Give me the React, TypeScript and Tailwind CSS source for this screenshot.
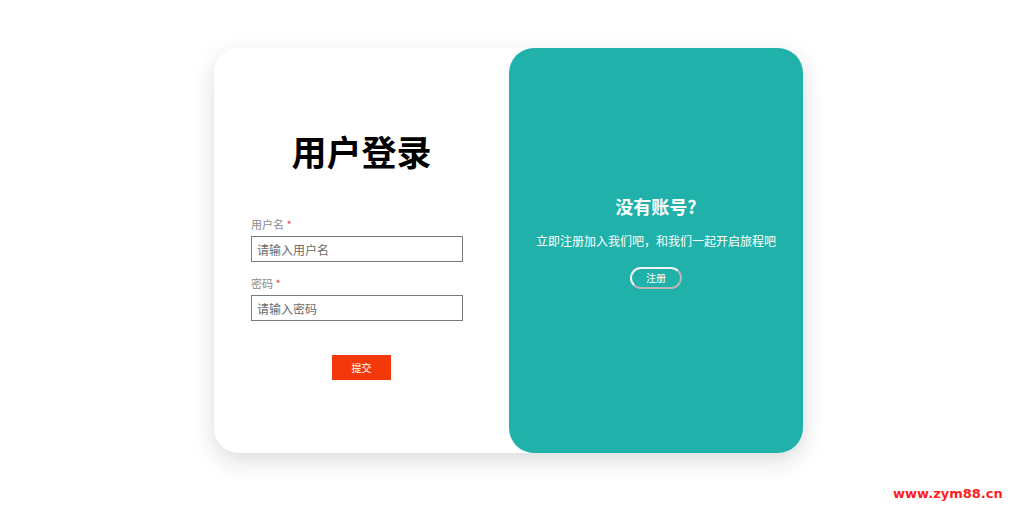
import React from "react";

export default function App() {
  const font = { fontFamily: '"Noto Sans CJK SC", "Noto Sans", sans-serif' };
  return (
    <div className="relative w-full h-[522px] bg-white overflow-hidden" style={font}>
      <div className="ml-[214px] pt-[48px]">
        <div className="flex w-[589px] h-[405px] rounded-[25px] bg-white shadow-[0_8px_24px_rgba(0,0,0,0.14)]">
          <div className="w-[295px] px-[37px] flex flex-col">
            <h1 className="pt-[82px] text-[35px] leading-[42px] font-bold text-center text-black">用户登录</h1>
            <label className="mt-[44px] text-[11px] leading-[16px] text-[#8a8a8a]">
              用户名 <span className="text-[#f0434a]">*</span>
            </label>
            <input
              className="mt-[4px] w-[212px] h-[26px] border border-[#7a7a7a] px-[5px] text-[12px] outline-none placeholder:text-[#6b6b6b]"
              placeholder="请输入用户名"
            />
            <label className="mt-[13px] text-[11px] leading-[16px] text-[#8a8a8a]">
              密码 <span className="text-[#f0434a]">*</span>
            </label>
            <input
              className="mt-[4px] w-[212px] h-[26px] border border-[#7a7a7a] px-[5px] text-[12px] outline-none placeholder:text-[#6b6b6b]"
              placeholder="请输入密码"
            />
            <button className="mt-[34px] mx-auto w-[59px] h-[25px] bg-[#f3380c] text-white text-[10px]">提交</button>
          </div>
          <div className="w-[294px] rounded-[25px] bg-[#20b2aa] flex flex-col items-center text-white">
            <h2 className="pt-[146px] text-[18px] leading-[24px] font-bold">没有账号?</h2>
            <p className="mt-[15px] text-[12px] leading-[16px]">立即注册加入我们吧，和我们一起开启旅程吧</p>
            <button className="mt-[18px] w-[52px] h-[22px] rounded-full border-2 border-[#f2f2f2] border-r-[#b5b5b5] border-b-[#b5b5b5] text-[10px] leading-none text-white">
              注册
            </button>
          </div>
        </div>
      </div>
      <div
        className="absolute left-[893px] top-[486px] text-[13px] leading-[16px] font-bold text-[#ff1e1e]"
        style={{ fontFamily: '"DejaVu Sans", sans-serif' }}
      >
        www.zym88.cn
      </div>
    </div>
  );
}
